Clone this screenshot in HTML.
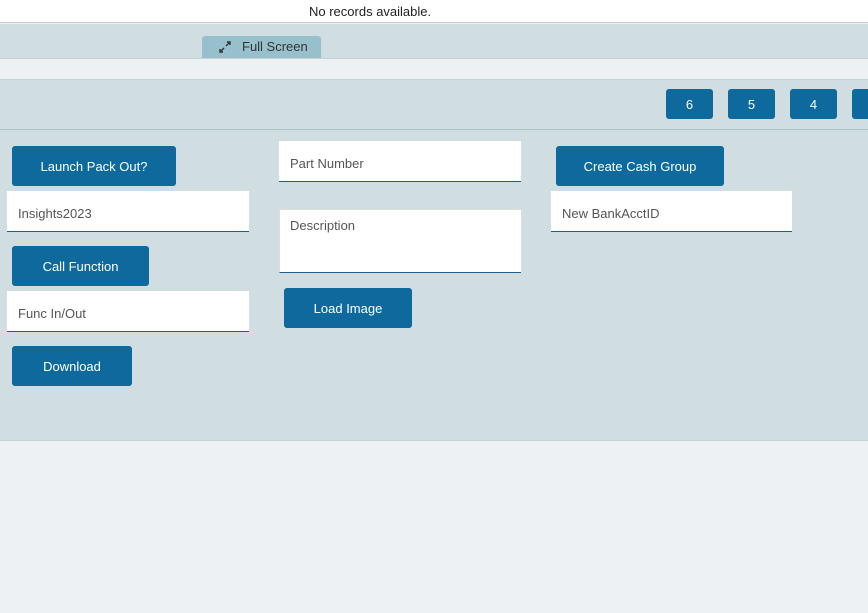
<!DOCTYPE html>
<html><head><style>
*{margin:0;padding:0;box-sizing:border-box}
body{width:868px;height:613px;overflow:hidden;background:#edf1f3;font-family:"Liberation Sans",sans-serif;position:relative}
.a{position:absolute}
.btn{position:absolute;background:#0e6a9c;color:#fff;border-radius:3px;font-size:13px;display:flex;align-items:center;justify-content:center}
.f{position:absolute;background:#fff;border-bottom:1px solid #1d5f88;color:#555;font-size:13px;padding-left:11px;padding-top:4px;display:flex;align-items:center}
</style></head><body>
<div class="a" style="left:0;top:0;width:868px;height:23px;background:#fff;border-bottom:1px solid #c8c8c8"></div>
<div class="a" style="left:309px;top:4px;font-size:13px;color:#222">No records available.</div>
<div class="a" style="left:0;top:24px;width:868px;height:34px;background:#d0dee2"></div>
<div class="a" style="left:202px;top:36px;width:119px;height:22px;background:#97c0cc;border-radius:3px 3px 0 0;font-size:13px;color:#333">
<svg class="a" style="left:17px;top:5px" width="12" height="12" viewBox="0 0 12 12" stroke="#333" stroke-width="1.4" fill="none"><path d="M7 5L11 1M8 1h3v3M5 7L1 11M1 8v3h3"/></svg>
<span class="a" style="left:40px;top:3px">Full Screen</span></div>
<div class="a" style="left:0;top:58px;width:868px;height:22px;background:#edf1f3;border-top:1px solid #c6d2d6;border-bottom:1px solid #c6d2d6"></div>
<div class="a" style="left:0;top:80px;width:868px;height:361px;background:#d0dee2;border-bottom:1px solid #c6d2d6"></div>
<div class="a" style="left:0;top:129px;width:868px;height:1px;background:#a9c2cb"></div>
<div class="btn" style="left:666px;top:89px;width:47px;height:30px">6</div>
<div class="btn" style="left:728px;top:89px;width:47px;height:30px">5</div>
<div class="btn" style="left:790px;top:89px;width:47px;height:30px">4</div>
<div class="btn" style="left:852px;top:89px;width:47px;height:30px"></div>
<div class="btn" style="left:12px;top:146px;width:164px;height:40px">Launch Pack Out?</div>
<div class="f" style="left:7px;top:191px;width:242px;height:41px">Insights2023</div>
<div class="btn" style="left:12px;top:246px;width:137px;height:40px">Call Function</div>
<div class="f" style="left:7px;top:291px;width:242px;height:41px">Func In/Out</div>
<div class="btn" style="left:12px;top:346px;width:120px;height:40px">Download</div>
<div class="f" style="left:279px;top:141px;width:242px;height:41px">Part Number</div>
<div class="f" style="left:279px;top:209px;width:242px;height:64px;align-items:flex-start;padding-top:8px;padding-left:10px;border-left:1px solid #ddd;border-top:1px solid #ddd">Description</div>
<div class="btn" style="left:284px;top:288px;width:128px;height:40px">Load Image</div>
<div class="btn" style="left:556px;top:146px;width:168px;height:40px">Create Cash Group</div>
<div class="f" style="left:551px;top:191px;width:241px;height:41px">New BankAcctID</div>
</body></html>
